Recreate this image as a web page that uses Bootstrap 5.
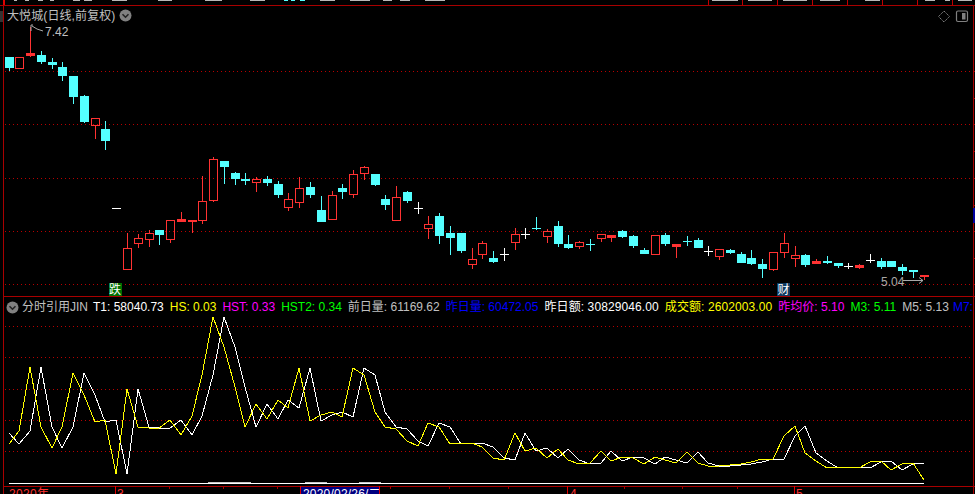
<!DOCTYPE html>
<html lang="zh">
<head>
<meta charset="utf-8">
<title>大悦城</title>
<link href="https://cdn.jsdelivr.net/npm/bootstrap@5.3.0/dist/css/bootstrap.min.css" rel="stylesheet">
<style>
html,body{background:#000;height:100%;overflow:hidden}
.stage{width:975px;height:494px;background:#000;font:12px/14px "Liberation Sans","Noto Sans CJK SC",sans-serif;color:#c0c0c0;overflow:hidden}
.top-strip{height:6px;flex:none}
.top-strip svg,.axis-strip svg{display:block}
.pane{display:grid;flex:none}
.pane>*{grid-area:1/1}
.pane-a{height:291px}
.pane-b{height:189px}
.axis-strip{height:8px;flex:none}
.chart{display:block}
.head-a{padding:1px 0 0 7px;align-self:start;height:18px}
.head-b{padding:2px 0 0 6px;align-self:start;height:18px;white-space:nowrap}
.head-a .ttl{font-size:12px;line-height:14px;letter-spacing:.1px}
.tools{position:absolute;right:5px;top:10px}
.ic{flex:none;display:block}
.lg{margin-right:6px}
.lg-wide{letter-spacing:.1px}
.lg-tight{margin-right:4px}
.lg-name{margin:0 5px 0 3px}
.c-w{color:#fff}.c-g{color:#c0c0c0}.c-y{color:#ff0}.c-m{color:#f0f}.c-l{color:#0f0}.c-b{color:#00f}
svg text{font-family:"Liberation Sans","Noto Sans CJK SC",sans-serif;font-size:12px}
</style>
</head>
<body class="m-0">
<div class="stage d-flex flex-column position-relative">
  <div class="top-strip"><svg id="sTop" width="975" height="6" viewBox="0 0 975 6"></svg></div>

  <div class="pane pane-a">
    <svg id="sA" class="chart" width="975" height="291" viewBox="0 6 975 291"></svg>
    <div class="head-a d-flex align-items-center">
      <span class="ttl">大悦城(日线,前复权)</span>
      <svg class="ic ms-1" width="13" height="13" viewBox="0 0 13 13"><circle cx="6.5" cy="6.5" r="6" fill="#808080"/><path d="M3.5 5.2 6.5 8.2 9.5 5.2" fill="none" stroke="#222" stroke-width="1.6"/></svg>
    </div>
  </div>

  <div class="pane pane-b">
    <svg id="sB" class="chart" width="975" height="189" viewBox="0 297 975 189"></svg>
    <div class="head-b d-flex align-items-center">
      <svg class="ic" width="13" height="13" viewBox="0 0 13 13"><circle cx="6.5" cy="6.5" r="6" fill="#808080"/><path d="M3.5 5.2 6.5 8.2 9.5 5.2" fill="none" stroke="#222" stroke-width="1.6"/></svg>
      <span class="lg-name c-g">分时引用JIN</span>
      <span class="lg c-w">T1: 58040.73</span>
      <span class="lg c-y">HS: 0.03</span>
      <span class="lg c-m">HST: 0.33</span>
      <span class="lg c-l">HST2: 0.34</span>
      <span class="lg c-g">前日量: 61169.62</span>
      <span class="lg c-b">昨日量: 60472.05</span>
      <span class="lg lg-wide c-w">昨日额: 30829046.00</span>
      <span class="lg lg-wide c-y">成交额: 2602003.00</span>
      <span class="lg c-m">昨均价: 5.10</span>
      <span class="lg c-l">M3: 5.11</span>
      <span class="lg lg-tight c-g">M5: 5.13</span>
      <span class="lg c-b">M7:</span>
    </div>
  </div>

  <div class="axis-strip"><svg id="sX" width="975" height="8" viewBox="0 486 975 8"></svg></div>

  <svg class="tools" width="32" height="13" viewBox="0 0 32 13">
    <path d="M6 1 11.5 6.5 6 12 .5 6.5Z" fill="none" stroke="#808080" stroke-dasharray="1.5 .7"/>
    <rect x="18.5" y="1" width="11" height="10.5" rx="1.5" fill="none" stroke="#808080" stroke-width="1.2"/>
    <rect x="24" y="3" width="3.5" height="6.5" fill="#808080"/>
  </svg>
</div>

<script src="https://cdn.jsdelivr.net/npm/bootstrap@5.3.0/dist/js/bootstrap.bundle.min.js"></script>
<script>
const RED='#ff3232',CY='#54ffff',GRID='#a80000',DOT='#b80000';
const K=[
[9.5,57,57,68,71,'c'],[19.5,57,57,69,69,'r'],[30.5,27,53,56,57,'r'],[41.5,51,55,62,64,'c'],[52.5,58,62,65,69,'c'],[62.5,62,67,76,81,'c'],[73.5,76,76,97,104,'c'],[84.5,95,96,122,123,'c'],[95.5,118,118,126,139,'r'],[105.5,121,129,141,150,'c'],
[116.5,208,208,208,208,'w'],[127.5,233,248,270,270,'r'],[138.5,234,238,244,248,'r'],[149.5,230,233,240,247,'r'],[159.5,230,230,235,245,'c'],[170.5,220,220,240,243,'r'],[181.5,212,219,222,222,'r'],[192.5,220,220,222,233,'r'],[202.5,176,201,221,224,'r'],[213.5,157,159,201,202,'r'],
[224.5,161,161,167,184,'c'],[235.5,172,173,179,185,'c'],[245.5,173,179,181,185,'c'],[256.5,177,179,183,192,'r'],[267.5,176,179,183,186,'c'],[278.5,181,184,195,198,'c'],[288.5,193,199,208,211,'r'],[299.5,177,188,203,208,'r'],[310.5,182,187,195,198,'c'],[321.5,196,210,222,222,'c'],
[332.5,191,195,220,220,'r'],[342.5,184,188,192,199,'c'],[353.5,170,174,195,198,'r'],[364.5,166,167,174,180,'r'],[375.5,174,174,185,186,'c'],[385.5,195,199,205,210,'c'],[396.5,186,197,221,221,'r'],[407.5,191,192,201,203,'c'],[418.5,202,208,208,214,'w'],[428.5,216,224,229,239,'r'],
[439.5,213,216,236,244,'c'],[450.5,226,233,238,255,'c'],[461.5,233,233,251,253,'c'],[472.5,248,259,265,269,'r'],[482.5,241,243,255,259,'r'],[493.5,251,258,262,263,'c'],[504.5,248,254,254,261,'w'],[515.5,228,234,243,250,'r'],[525.5,228,234,234,239,'w'],[536.5,217,228,229,230,'x'],
[547.5,229,231,237,243,'r'],[558.5,221,226,244,247,'c'],[568.5,235,244,248,249,'c'],[579.5,241,242,247,249,'r'],[590.5,239,244,244,251,'x'],[601.5,234,234,239,242,'r'],[611.5,235,235,238,242,'r'],[622.5,230,231,237,238,'c'],[633.5,235,236,246,248,'c'],[644.5,248,250,254,254,'c'],
[655.5,235,235,255,255,'r'],[665.5,233,235,244,246,'c'],[676.5,244,244,247,258,'r'],[687.5,236,241,241,246,'x'],[698.5,238,240,248,248,'c'],[708.5,246,251,251,256,'w'],[719.5,249,249,257,260,'r'],[730.5,249,250,253,254,'c'],[741.5,252,254,263,263,'c'],[751.5,250,258,264,265,'c'],
[762.5,259,264,269,278,'c'],[773.5,252,252,270,271,'r'],[784.5,233,243,253,258,'r'],[795.5,246,255,259,267,'r'],[805.5,254,255,265,267,'c'],[816.5,259,261,264,264,'r'],[827.5,256,261,263,264,'c'],[838.5,263,263,266,268,'c'],[848.5,263,266,266,269,'w'],[859.5,264,265,268,269,'r'],
[870.5,254,260,260,263,'w'],[881.5,258,261,267,269,'c'],[891.5,261,261,267,267,'c'],[902.5,264,267,271,275,'c'],[913.5,270,270,272,278,'c'],[924.5,275,275,277,280,'r']];
const Y=[444,431,367,427,448,427,373,395,422,420,474,389,427,428,428,420,435,416,375,317,347,387,427,404,419,400,408,368,421,415,
412,417,368,375,412,427,429,441,446,423,427,444,443,443,447,458,460,433,451,448,458,449,460,464,463,451,461,457,458,464,
457,460,463,452,463,466,466,465,464,462,459,459,436,426,453,461,468,467,467,468,462,461,470,464,463,480];
const hline=(y,x1,x2,c)=>`<line x1="${x1}" x2="${x2}" y1="${y+.5}" y2="${y+.5}" stroke="${c}"/>`;
const vline=(x,y1,y2,c)=>`<line x1="${x+.5}" x2="${x+.5}" y1="${y1}" y2="${y2}" stroke="${c}"/>`;
const rect=(x,y,w,h,c)=>`<rect x="${x}" y="${y}" width="${w}" height="${h}" fill="${c}"/>`;
/* dotted grid line: one exact pixel every four */
const dots=y=>{let s='';for(let x=5;x<973;x+=4)s+=`M${x} ${y}h1v1h-1z`;return `<path d="${s}" fill="${DOT}"/>`;};

/* top strip */
let t=hline(5,0,975,GRID)+rect(3,0,2,5,'#e00000');
const gray='#b8b8b8';
[[14,17],[25,29],[38,43],[50,54],[73,80],[84,92],[112,127],[158,172],[205,222],[250,265],[320,335],[350,370],[383,392],[400,410],[425,445]].forEach(s=>t+=rect(s[0],0,s[1]-s[0],1,gray));
[[284,288],[291,295],[300,305]].forEach(s=>t+=rect(s[0],0,s[1]-s[0],1,CY));
[[712,738],[748,772],[783,807],[820,840],[865,880],[925,935],[945,950],[958,972]].forEach(s=>t+=rect(s[0],0,s[1]-s[0],1,gray));
[708,742,777,812,847,882,917,952].forEach(x=>t+=vline(x,0,5,'#c00000'));
document.getElementById('sTop').innerHTML=t;

/* candle pane */
let a=rect(0,11,3,11,'#333');
a+=`<g shape-rendering="crispEdges">`;
a+=vline(3,6,297,GRID)+vline(973,6,297,GRID);
[71,124,178,231,284].forEach(y=>a+=dots(y));
[71,98,124,151,178,205,231,258,284].forEach(y=>a+=hline(y,973,975,GRID));
a+=rect(973,208,2,15,'#0000a0');
K.forEach(k=>{
  const [x,h,top,bot,l,ty]=k, px=x-.5;
  if(ty==='c'){
    a+=vline(px,h,l,CY)+rect(x-4.5,top,9,bot-top,CY);
  }else if(ty==='r'){
    a+=vline(px,h,top,RED)+vline(px,bot,l,RED);
    if(bot-top<=3) a+=rect(x-4.5,top,9,bot-top,RED);
    else a+=`<rect x="${x-4}" y="${top+.5}" width="8" height="${bot-top-1}" fill="none" stroke="${RED}"/>`;
  }else{
    const c=ty==='w'?'#fff':CY;
    a+=vline(px,h,l,c)+hline(top,x-4.5,x+4.5,c);
  }
});
a+=`</g>`;
a+=`<path d="M31 31V25H33M32 26 37 29 43 31" fill="none" stroke="#a8a8a8"/>`;
a+=`<text x="45" y="36" fill="#c0c0c0">7.42</text>`;
a+=`<text x="881" y="286" fill="#a8a8a8">5.04</text>`;
a+=`<path d="M903 280.5H923M919 277.5 923 280.5 919 283.5" fill="none" stroke="#a8a8a8"/>`;
a+=rect(109,283,13,14,'#007000')+`<text x="109" y="294" fill="#fff">跌</text>`;
a+=rect(777,283,13,14,'#0d3a60')+`<text x="777.5" y="294" fill="#fff">财</text>`;
a+=hline(296,3,975,GRID);
document.getElementById('sA').innerHTML=a;

/* indicator pane */
const pts=(arr)=>arr.map((y,i)=>K[i][0]-.5+','+y).join(' ');
const W=[433].concat(Y.slice(0,-1));
let b=`<g shape-rendering="crispEdges">`;
b+=vline(3,297,486,GRID)+vline(973,297,486,GRID);
[326,357,389,420,451].forEach(y=>b+=dots(y));
b+=`<polyline points="${pts(W)}" fill="none" stroke="#fff"/>`;
b+=`<polyline points="${pts(Y)}" fill="none" stroke="#ff0"/>`;
b+=rect(208,482,43,1,'#c8c8c8')+rect(305,482,22,1,'#c8c8c8')+rect(359,482,22,1,'#c8c8c8');
b+=hline(483,9,924,'#fff');
b+=`</g>`;
document.getElementById('sB').innerHTML=b;

/* time axis */
let x='<g shape-rendering="crispEdges">'+hline(486,3,975,GRID)+vline(3,486,494,GRID)+vline(973,486,494,GRID);
[115,567,794].forEach(v=>x+=vline(v,486,494,'#e00000'));
[169,223,277,390,449,508,624,682,737].forEach(v=>x+=vline(v,486,489,GRID));
x+=rect(301,487,78,7,'#000080')+vline(300,486,494,'#e00000')+vline(379,486,494,'#e00000')+'</g>';
x+=`<text x="9" y="498" fill="#ff3232" letter-spacing=".3">2020年</text>`;
x+=`<text x="117" y="498" fill="#ff3232">3</text>`;
x+=`<text x="303" y="498" fill="#fff" letter-spacing=".2">2020/02/26/二</text>`;
x+=`<text x="570" y="498" fill="#ff3232">4</text>`;
x+=`<text x="796" y="498" fill="#ff3232">5</text>`;
document.getElementById('sX').innerHTML=x;
</script>
</body>
</html>
